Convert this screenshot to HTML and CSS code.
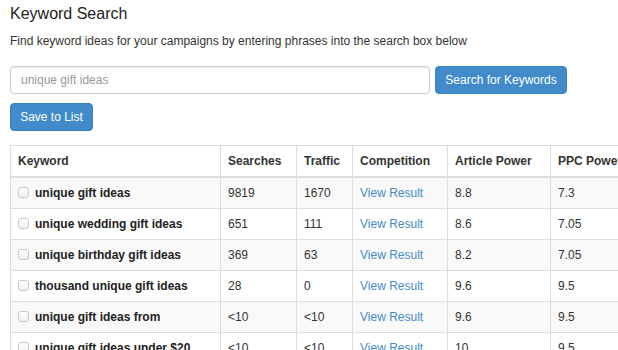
FILE: index.html
```html
<!DOCTYPE html>
<html lang="en">
<head>
<meta charset="UTF-8" />
<meta name="viewport" content="width=device-width, initial-scale=1" />
<title>Keyword Search</title>
<link rel="stylesheet" href="styles.css">
</head>
<body>

<section class="kwSearch">
  <h3 class="kwTitle">Keyword Search</h3>
  <p class="kwIntro">Find keyword ideas for your campaigns by entering phrases into the search box below</p>

  <div class="searchRow">
    <input class="searchInput" type="text" placeholder="unique gift ideas" />
    <button class="btnBlue" id="searchBtn">Search for Keywords</button>
  </div>
  <div class="saveRow">
    <button class="btnBlue" id="saveBtn">Save to List</button>
  </div>

  <table class="kwTable">
    <colgroup>
      <col class="colKeyword">
      <col class="colSearches">
      <col class="colTraffic">
      <col class="colComp">
      <col class="colArticle">
      <col class="colPpc">
    </colgroup>
    <thead>
      <tr>
        <th>Keyword</th>
        <th>Searches</th>
        <th>Traffic</th>
        <th>Competition</th>
        <th>Article Power</th>
        <th>PPC Power</th>
      </tr>
    </thead>
    <tbody>
      <tr>
        <td class="kwCell"><span class="checkBox"></span>unique gift ideas</td>
        <td>9819</td><td>1670</td><td><a href="#">View Result</a></td><td>8.8</td><td>7.3</td>
      </tr>
      <tr>
        <td class="kwCell"><span class="checkBox"></span>unique wedding gift ideas</td>
        <td>651</td><td>111</td><td><a href="#">View Result</a></td><td>8.6</td><td>7.05</td>
      </tr>
      <tr>
        <td class="kwCell"><span class="checkBox"></span>unique birthday gift ideas</td>
        <td>369</td><td>63</td><td><a href="#">View Result</a></td><td>8.2</td><td>7.05</td>
      </tr>
      <tr>
        <td class="kwCell"><span class="checkBox"></span>thousand unique gift ideas</td>
        <td>28</td><td>0</td><td><a href="#">View Result</a></td><td>9.6</td><td>9.5</td>
      </tr>
      <tr>
        <td class="kwCell"><span class="checkBox"></span>unique gift ideas from</td>
        <td>&lt;10</td><td>&lt;10</td><td><a href="#">View Result</a></td><td>9.6</td><td>9.5</td>
      </tr>
      <tr>
        <td class="kwCell"><span class="checkBox"></span>unique gift ideas under $20</td>
        <td>&lt;10</td><td>&lt;10</td><td><a href="#">View Result</a></td><td>10</td><td>9.5</td>
      </tr>
    </tbody>
  </table>
</section>

</body>
</html>
```

FILE: styles.css
```css
html, body {
  margin: 0;
  padding: 0;
  overflow: hidden;
  background: #fff;
}

body {
  font-family: "Liberation Sans", Arial, sans-serif;
  font-size: 12px;
  color: #333;
}

.kwSearch {
  padding: 4px 10px 0 10px;
}

.kwTitle {
  font-size: 16px;
  font-weight: normal;
  line-height: 20px;
  margin: 0;
  color: #222;
}

.kwIntro {
  margin: 9px 0 0 0;
  line-height: 16px;
}

.searchRow {
  display: flex;
  gap: 5px;
  margin-top: 17px;
}

.searchInput {
  width: 420px;
  height: 28px;
  box-sizing: border-box;
  border: 1px solid #ccc;
  border-radius: 4px;
  padding: 0 10px;
  font-family: inherit;
  font-size: 12px;
  color: #555;
  box-shadow: inset 0 1px 1px rgba(0, 0, 0, 0.075);
}

.searchInput::placeholder {
  color: #999;
}

.btnBlue {
  height: 28px;
  box-sizing: border-box;
  padding: 0;
  border: 1px solid #3a7fc0;
  border-radius: 4px;
  background-color: #428bca;
  color: #fff;
  font-family: inherit;
  font-size: 12px;
  white-space: nowrap;
  text-align: center;
}

#searchBtn {
  width: 132px;
}

#saveBtn {
  width: 83px;
}

.saveRow {
  margin-top: 9px;
}

.kwTable {
  margin-top: 14px;
  border-collapse: collapse;
  table-layout: fixed;
  width: 640px;
  border: 1px solid #ddd;
}

.colKeyword { width: 210px; }
.colSearches { width: 76px; }
.colTraffic { width: 56px; }
.colComp { width: 95px; }
.colArticle { width: 103px; }
.colPpc { width: 100px; }

.kwTable th,
.kwTable td {
  border: 1px solid #ddd;
  padding: 0 7px;
  text-align: left;
  white-space: nowrap;
  overflow: hidden;
}

.kwTable th {
  height: 30px;
  border-bottom-width: 2px;
  font-weight: bold;
}

.kwTable td {
  height: 30px;
}

.kwTable tbody tr:nth-child(odd) {
  background-color: #f9f9f9;
}

.kwCell {
  font-weight: bold;
  color: #222;
}

.checkBox {
  display: inline-block;
  width: 9px;
  height: 9px;
  border: 1px solid #c8c8c8;
  border-radius: 3px;
  background: linear-gradient(#fff, #f0f0f0);
  margin-right: 6px;
  vertical-align: -1px;
}

.kwTable a {
  color: #428bca;
  text-decoration: none;
}
```
